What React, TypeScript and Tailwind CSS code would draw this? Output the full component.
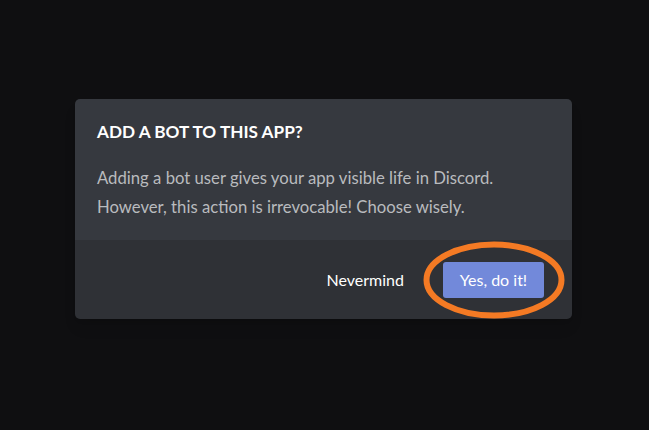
import React from 'react';

// Discord "add bot" confirmation modal
const App: React.FC = () => {
  return (
    <div className="w-[649px] h-[430px] bg-[#0f0f11] flex pl-[75px] pt-[99px] font-['Lato',sans-serif]">
      <div className="w-[497px] h-[220px] rounded-[5px] overflow-hidden flex flex-col shadow-lg">
        <div className="h-[141px] bg-[#36393f] px-[22px] pt-[21px]">
          <h2 className="text-[17.2px] font-bold text-white leading-[24px]">ADD A BOT TO THIS APP?</h2>
          <p className="mt-[20px] text-[16.7px] leading-[29px] text-[#b9bbbe]">
            Adding a bot user gives your app visible life in Discord.
            <br />
            However, this action is irrevocable! Choose wisely.
          </p>
        </div>
        <div className="flex-1 bg-[#2f3136] flex items-center justify-end pr-[28px]">
          <button className="text-[16px] text-white px-[20px] h-[36px] mr-[19px]">Nevermind</button>
          <div className="relative">
            <button className="w-[101px] h-[36px] rounded-[3px] bg-[#7289da] text-[16px] text-white">
              Yes, do it!
            </button>
            <svg
              className="absolute left-[-20px] top-[-21px] pointer-events-none"
              width="142"
              height="78"
              viewBox="0 0 142 78"
            >
              <ellipse cx="71" cy="39" rx="67.5" ry="35.5" fill="none" stroke="#f47a24" strokeWidth="6" />
            </svg>
          </div>
        </div>
      </div>
    </div>
  );
};

export default App;
